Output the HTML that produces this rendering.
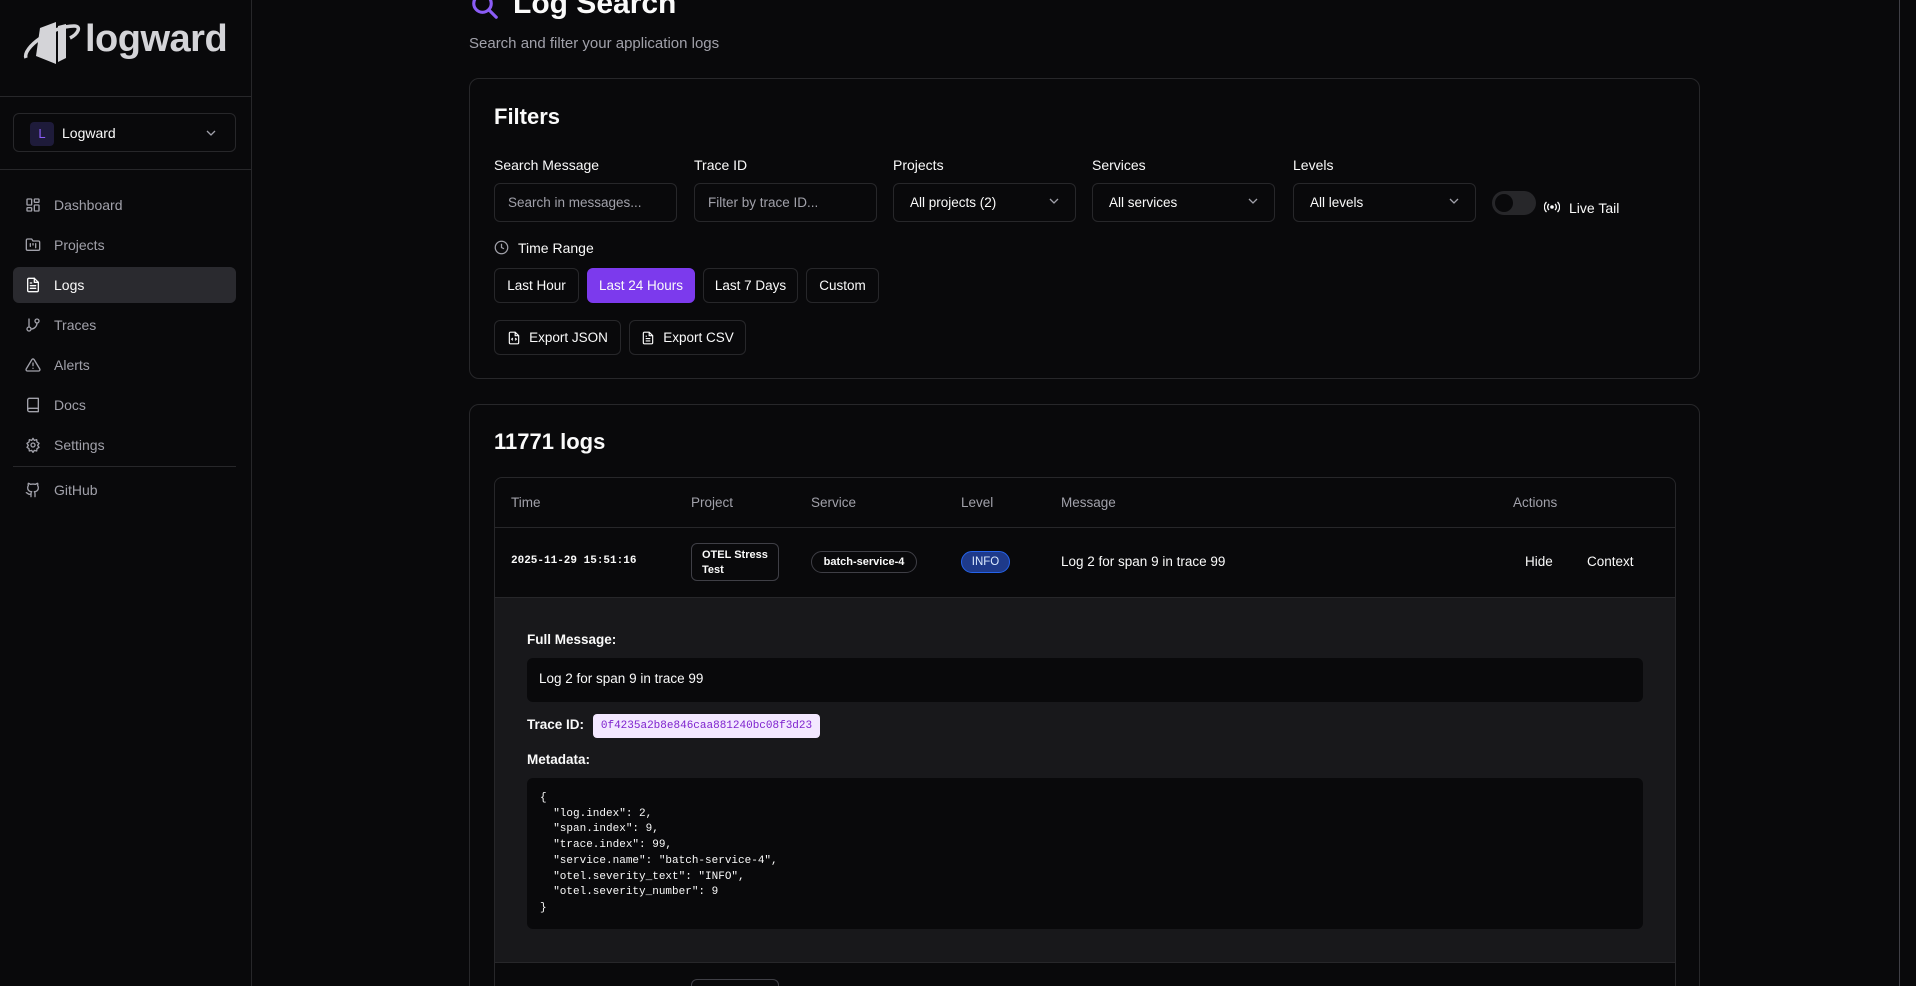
<!DOCTYPE html>
<html style="overflow:hidden;width:1916px;height:986px"><head><meta charset="utf-8"><style>
*{box-sizing:border-box;margin:0;padding:0}
body{width:1916px;height:986px;overflow:hidden;background:#09090b;font-family:"Liberation Sans",sans-serif;color:#fafafa;position:relative}
.a{position:absolute}
.side{left:0;top:0;width:252px;height:986px;border-right:1px solid #27272a;background:#09090b}
.hl{height:1px;background:#27272a}
.nav{left:13px;width:223px;height:36px;border-radius:6px;font-size:14px;color:#a1a1aa;display:flex;align-items:center;padding-left:12px}
.nav svg{width:16px;height:16px;margin-right:13px;stroke:#a1a1aa;fill:none;stroke-width:2;stroke-linecap:round;stroke-linejoin:round}
.card{border:1px solid #27272a;border-radius:10px;background:#09090b}
.lbl{font-size:14px;color:#fafafa}
.inp{height:39px;width:183px;border:1px solid #27272a;border-radius:6px;font-size:13.5px;display:flex;align-items:center;padding-left:13px}
.ph{color:#a1a1aa}
.chev{position:absolute;right:16px;top:12px;width:10px;height:10px}
.btn{height:35px;border:1px solid #27272a;border-radius:6px;font-size:13.5px;display:flex;align-items:center;justify-content:center}
.th{font-size:13.5px;color:#a1a1aa;top:495px}
.mono{font-family:"Liberation Mono",monospace}
</style></head><body>
<div class="a side">
  <div class="a" style="left:22px;top:18px;width:210px;height:50px">
    <svg width="60" height="50" viewBox="0 0 60 50" class="a" style="left:0;top:0">
      <path d="M18 10 L34 4 L34 46 L14 38 Z" fill="#d4d4d8"/>
      <path d="M36 8 L44 6 L44 40 L36 44 Z" fill="#d4d4d8"/>
      <path d="M4 40 C0 30 30 8 52 8 C60 8 56 16 48 20" stroke="#d4d4d8" stroke-width="3.5" fill="none"/>
    </svg>
    <div class="a" style="left:63px;top:0px;font-size:38px;font-weight:bold;color:#d4d4d8;letter-spacing:-0.5px">logward</div>
  </div>
  <div class="a hl" style="left:0;top:96px;width:252px"></div>
  <div class="a" style="left:13px;top:113px;width:223px;height:39px;border:1px solid #27272a;border-radius:6px">
    <div class="a" style="left:16px;top:8px;width:24px;height:24px;background:#1e1b3a;border-radius:4px;color:#8b5cf6;font-size:13px;text-align:center;line-height:24px">L</div>
    <div class="a" style="left:48px;top:11px;font-size:14px">Logward</div>
    <svg class="a" style="left:192px;top:14px" width="10" height="10" viewBox="0 0 10 10"><path d="M1 3l4 4 4-4" stroke="#a1a1aa" fill="none" stroke-width="1.3"/></svg>
  </div>
  <div class="a hl" style="left:0;top:169px;width:252px"></div>
  <div class="a nav" style="top:187px"><svg viewBox="0 0 24 24"><rect x="3" y="3" width="7" height="9" rx="1"/><rect x="14" y="3" width="7" height="5" rx="1"/><rect x="14" y="12" width="7" height="9" rx="1"/><rect x="3" y="16" width="7" height="5" rx="1"/></svg>Dashboard</div>
  <div class="a nav" style="top:227px"><svg viewBox="0 0 24 24"><path d="M4 20h16a2 2 0 0 0 2-2V8a2 2 0 0 0-2-2h-8l-2-3H4a2 2 0 0 0-2 2v13a2 2 0 0 0 2 2z"/><path d="M8 10v4M12 10v2M16 10v6"/></svg>Projects</div>
  <div class="a nav" style="top:267px;background:#2a2a2f;color:#fafafa"><svg viewBox="0 0 24 24" style="stroke:#fafafa"><path d="M14 2H6a2 2 0 0 0-2 2v16a2 2 0 0 0 2 2h12a2 2 0 0 0 2-2V8z"/><path d="M14 2v6h6M16 13H8M16 17H8M10 9H8"/></svg>Logs</div>
  <div class="a nav" style="top:307px"><svg viewBox="0 0 24 24"><path d="M6 3v12"/><circle cx="18" cy="6" r="3"/><circle cx="6" cy="18" r="3"/><path d="M18 9a9 9 0 0 1-9 9"/></svg>Traces</div>
  <div class="a nav" style="top:347px"><svg viewBox="0 0 24 24"><path d="M10.3 3.9 1.8 18a2 2 0 0 0 1.7 3h17a2 2 0 0 0 1.7-3L13.7 3.9a2 2 0 0 0-3.4 0z"/><path d="M12 9v4M12 17h.01"/></svg>Alerts</div>
  <div class="a nav" style="top:387px"><svg viewBox="0 0 24 24"><path d="M4 19.5A2.5 2.5 0 0 1 6.5 17H20V2H6.5A2.5 2.5 0 0 0 4 4.5v15A2.5 2.5 0 0 0 6.5 22H20v-5"/></svg>Docs</div>
  <div class="a nav" style="top:427px"><svg viewBox="0 0 24 24"><circle cx="12" cy="12" r="3"/><path d="M12 2l2 3 3.5-1 .5 3.5 3 2-2 3 2 3-3 2-.5 3.5-3.5-1-2 3-2-3-3.5 1-.5-3.5-3-2 2-3-2-3 3-2 .5-3.5 3.5 1z"/></svg>Settings</div>
  <div class="a hl" style="left:13px;top:466px;width:223px"></div>
  <div class="a nav" style="top:472px"><svg viewBox="0 0 24 24"><path d="M15 22v-4a4.8 4.8 0 0 0-1-3.5c3 0 6-2 6-5.5.1-1.3-.3-2.5-1-3.5.3-1.2.3-2.4 0-3.5 0 0-1 0-3 1.5-2.6-.5-5.4-.5-8 0C6 2 5 2 5 2c-.3 1.1-.3 2.3 0 3.5A5.4 5.4 0 0 0 4 9c0 3.5 3 5.5 6 5.5-.4.5-.7 1.1-.8 1.7-.2.6-.2 1.2-.2 1.8v4"/><path d="M9 18c-4.5 2-5-2-7-2"/></svg>GitHub</div>
</div>
<div class="a" style="left:1899px;top:0;width:1px;height:986px;background:#3f3f46"></div>

<svg class="a" style="left:470px;top:-9px" width="30" height="30" viewBox="0 0 24 24"><circle cx="10" cy="10" r="7" stroke="#8b5cf6" stroke-width="2.5" fill="none"/><path d="M15 15l6 6" stroke="#8b5cf6" stroke-width="2.5" stroke-linecap="round"/></svg>
<div class="a" style="left:513px;top:-13px;font-size:30px;font-weight:bold">Log Search</div>
<div class="a" style="left:469px;top:35px;font-size:15px;color:#a1a1aa">Search and filter your application logs</div>

<div class="a card" style="left:469px;top:78px;width:1231px;height:301px"></div>
<div class="a" style="left:494px;top:104px;font-size:22px;font-weight:bold">Filters</div>
<div class="a lbl" style="left:494px;top:157px">Search Message</div>
<div class="a lbl" style="left:694px;top:157px">Trace ID</div>
<div class="a lbl" style="left:893px;top:157px">Projects</div>
<div class="a lbl" style="left:1092px;top:157px">Services</div>
<div class="a lbl" style="left:1293px;top:157px">Levels</div>
<div class="a inp ph" style="left:494px;top:183px">Search in messages...</div>
<div class="a inp ph" style="left:694px;top:183px">Filter by trace ID...</div>
<div class="a inp" style="left:893px;top:183px;padding-left:16px">All projects (2)<svg class="chev" viewBox="0 0 10 10"><path d="M1 3l4 4 4-4" stroke="#a1a1aa" fill="none" stroke-width="1.3"/></svg></div>
<div class="a inp" style="left:1092px;top:183px;padding-left:16px">All services<svg class="chev" viewBox="0 0 10 10"><path d="M1 3l4 4 4-4" stroke="#a1a1aa" fill="none" stroke-width="1.3"/></svg></div>
<div class="a inp" style="left:1293px;top:183px;padding-left:16px">All levels<svg class="chev" viewBox="0 0 10 10"><path d="M1 3l4 4 4-4" stroke="#a1a1aa" fill="none" stroke-width="1.3"/></svg></div>
<div class="a" style="left:1492px;top:191px;width:44px;height:24px;border-radius:12px;background:#27272a"><div class="a" style="left:3px;top:3px;width:18px;height:18px;border-radius:50%;background:#09090b"></div></div>
<svg class="a" style="left:1544px;top:201px" width="16" height="12" viewBox="0 0 16 12"><circle cx="8" cy="6" r="1.8" fill="#fafafa"/><path d="M5 3a4 4 0 0 0 0 6M11 3a4 4 0 0 1 0 6M2.5 1a7 7 0 0 0 0 10M13.5 1a7 7 0 0 1 0 10" stroke="#fafafa" fill="none" stroke-width="1.3"/></svg>
<div class="a" style="left:1569px;top:200px;font-size:14px">Live Tail</div>

<svg class="a" style="left:494px;top:240px" width="15" height="15" viewBox="0 0 24 24"><circle cx="12" cy="12" r="10" stroke="#a1a1aa" stroke-width="2" fill="none"/><path d="M12 6v6l4 2" stroke="#a1a1aa" stroke-width="2" fill="none"/></svg>
<div class="a lbl" style="left:518px;top:240px">Time Range</div>
<div class="a btn" style="left:494px;top:268px;width:85px">Last Hour</div>
<div class="a btn" style="left:587px;top:268px;width:108px;background:#7c3aed;border-color:#7c3aed">Last 24 Hours</div>
<div class="a btn" style="left:703px;top:268px;width:95px">Last 7 Days</div>
<div class="a btn" style="left:806px;top:268px;width:73px">Custom</div>
<div class="a btn" style="left:494px;top:320px;width:127px"><svg width="14" height="16" viewBox="0 0 24 24" style="margin-right:8px"><path d="M14 2H6a2 2 0 0 0-2 2v16a2 2 0 0 0 2 2h12a2 2 0 0 0 2-2V8zM14 2v6h6M10 12l-2 2 2 2M14 12l2 2-2 2" stroke="#fafafa" fill="none" stroke-width="2"/></svg>Export JSON</div>
<div class="a btn" style="left:629px;top:320px;width:117px"><svg width="14" height="16" viewBox="0 0 24 24" style="margin-right:8px"><path d="M14 2H6a2 2 0 0 0-2 2v16a2 2 0 0 0 2 2h12a2 2 0 0 0 2-2V8zM14 2v6h6M16 13H8M16 17H8M10 9H8" stroke="#fafafa" fill="none" stroke-width="2"/></svg>Export CSV</div>

<div class="a card" style="left:469px;top:404px;width:1231px;height:600px"></div>
<div class="a" style="left:494px;top:429px;font-size:22px;font-weight:bold">11771 logs</div>
<div class="a" style="left:494px;top:477px;width:1182px;height:540px;border:1px solid #27272a;border-radius:8px;overflow:hidden">
  <div class="a" style="left:0;top:49px;width:100%;height:1px;background:#27272a"></div>
  <div class="a" style="left:0;top:119px;width:100%;height:366px;background:#18181b;border-top:1px solid #27272a;border-bottom:1px solid #27272a"></div>
</div>
<div class="a th" style="left:511px">Time</div>
<div class="a th" style="left:691px">Project</div>
<div class="a th" style="left:811px">Service</div>
<div class="a th" style="left:961px">Level</div>
<div class="a th" style="left:1061px">Message</div>
<div class="a th" style="left:1513px">Actions</div>
<div class="a mono" style="left:511px;top:555px;font-size:11px;font-weight:bold">2025-11-29 15:51:16</div>
<div class="a" style="left:691px;top:543px;width:88px;height:38px;border:1px solid #3f3f46;border-radius:6px;font-size:11px;font-weight:bold;padding:4px 10px;line-height:15px">OTEL Stress Test</div>
<div class="a" style="left:811px;top:551px;width:106px;height:22px;border:1px solid #3f3f46;border-radius:11px;font-size:11px;font-weight:bold;text-align:center;line-height:20px">batch-service-4</div>
<div class="a" style="left:961px;top:551px;width:49px;height:22px;border:1px solid #2563eb;background:#1e3a8a;border-radius:11px;font-size:11.5px;text-align:center;line-height:20px;color:#dbeafe">INFO</div>
<div class="a" style="left:1061px;top:554px;font-size:13.5px">Log 2 for span 9 in trace 99</div>
<div class="a" style="left:1525px;top:554px;font-size:13.5px">Hide</div>
<div class="a" style="left:1587px;top:554px;font-size:13.5px">Context</div>

<div class="a" style="left:527px;top:632px;font-size:13.5px;font-weight:bold">Full Message:</div>
<div class="a" style="left:527px;top:658px;width:1116px;height:44px;background:#09090b;border-radius:6px;font-size:13.5px;padding:13px 0 0 12px">Log 2 for span 9 in trace 99</div>
<div class="a" style="left:527px;top:717px;font-size:13.5px;font-weight:bold">Trace ID:</div>
<div class="a mono" style="left:593px;top:714px;width:227px;height:24px;background:#f3e8ff;border-radius:4px;color:#7e22ce;font-size:11px;text-align:center;line-height:24px">0f4235a2b8e846caa881240bc08f3d23</div>
<div class="a" style="left:527px;top:752px;font-size:13.5px;font-weight:bold">Metadata:</div>
<pre class="a mono" style="left:527px;top:778px;width:1116px;height:151px;background:#09090b;border-radius:6px;font-size:11px;line-height:15.7px;padding:13px 0 0 13px;color:#fafafa">{
  "log.index": 2,
  "span.index": 9,
  "trace.index": 99,
  "service.name": "batch-service-4",
  "otel.severity_text": "INFO",
  "otel.severity_number": 9
}</pre>
<div class="a" style="left:691px;top:979px;width:88px;height:30px;border:1px solid #3f3f46;border-radius:6px"></div>
</body></html>
